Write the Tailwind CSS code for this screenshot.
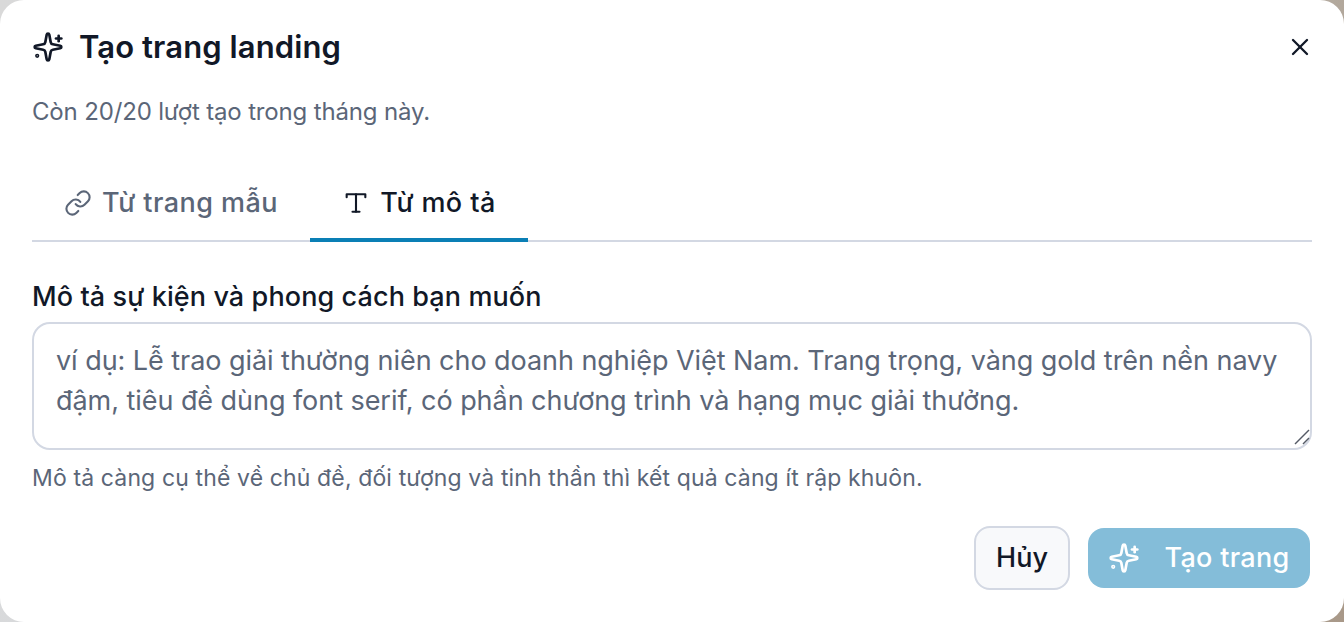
<!DOCTYPE html>
<html lang="vi">
  <head>
    <meta charset="UTF-8" />
    <title>Tạo trang landing</title>
    <script src="https://cdn.jsdelivr.net/npm/@tailwindcss/browser@4"></script>
  </head>
  <body class="h-[622px] w-[1344px] overflow-hidden bg-[linear-gradient(100deg,#d9d9d9,#d5dbe3_40%,#c9ccc9_75%,#a89888)] font-['Inter',sans-serif]">
    <div class="flex h-[622px] flex-col rounded-[24px] bg-white px-8 pt-[28px] text-[#111827]">
      <!-- Header -->
      <div class="flex h-[38px] items-center justify-between">
        <div class="flex items-center gap-[15px]">
          <svg class="h-[32px] w-[32px]" viewBox="0 0 24 24" fill="none" stroke="currentColor" stroke-width="2" stroke-linecap="round" stroke-linejoin="round">
            <path d="M11.017 2.814a1 1 0 0 1 1.966 0l1.051 5.558a2 2 0 0 0 1.594 1.594l5.558 1.051a1 1 0 0 1 0 1.966l-5.558 1.051a2 2 0 0 0-1.594 1.594l-1.051 5.558a1 1 0 0 1-1.966 0l-1.051-5.558a2 2 0 0 0-1.594-1.594l-5.558-1.051a1 1 0 0 1 0-1.966l5.558-1.051a2 2 0 0 0 1.594-1.594z" />
            <path d="M20 3.6v4" />
            <path d="M22 5.6h-4" />
            <circle cx="3.9" cy="18.6" r="0.6" />
          </svg>
          <h1 class="text-[31px] leading-[38px] font-semibold tracking-[0.1px]">Tạo trang landing</h1>
        </div>
        <svg class="mr-[-2px] h-[28px] w-[28px]" viewBox="0 0 24 24" fill="none" stroke="currentColor" stroke-width="2" stroke-linecap="round" stroke-linejoin="round">
          <path d="M18 6 6 18" />
          <path d="m6 6 12 12" />
        </svg>
      </div>
      <p class="mt-[31px] text-[24px] leading-[30px] tracking-[-0.16px] text-[#5b6678]">Còn 20/20 lượt tạo trong tháng này.</p>

      <!-- Tabs -->
      <div class="mt-[35px] flex h-[80px] border-b-2 border-[#d3d8e3]">
        <div class="flex h-[80px] w-[278px] items-center justify-center gap-[10px] pt-[2px] text-[#5b6678]">
          <svg class="h-[28px] w-[28px]" viewBox="0 0 24 24" fill="none" stroke="currentColor" stroke-width="1.8" stroke-linecap="round" stroke-linejoin="round">
            <path d="M10 13a5 5 0 0 0 7.54.54l3-3a5 5 0 0 0-7.07-7.07l-1.72 1.71" />
            <path d="M14 11a5 5 0 0 0-7.54-.54l-3 3a5 5 0 0 0 7.07 7.07l1.71-1.71" />
          </svg>
          <span class="text-[27px] font-medium tracking-[0.45px]">Từ trang mẫu</span>
        </div>
        <div class="flex h-[80px] w-[218px] items-center justify-center gap-[10px] border-b-4 border-[#0a7fb5] pt-[6px]">
          <svg class="h-[28px] w-[28px]" viewBox="0 0 24 24" fill="none" stroke="currentColor" stroke-width="1.8" stroke-linecap="round" stroke-linejoin="round">
            <path d="M4 7V4.5h16V7" />
            <path d="M12 4.5v15" />
            <path d="M9 19.5h6" />
          </svg>
          <span class="text-[27px] font-medium tracking-[0.4px]">Từ mô tả</span>
        </div>
      </div>

      <!-- Field -->
      <label class="mt-[37px] text-[27px] leading-[36px] font-medium tracking-[0.1px]">Mô tả sự kiện và phong cách bạn muốn</label>
      <div class="relative mt-[7px] h-[128px]">
        <textarea
          class="h-[128px] w-full resize-none rounded-[18px] border-2 border-[#d3d8e3] px-[22px] py-[17px] text-[27px] leading-[40px] tracking-[-0.05px] placeholder:text-[#5b6678]"
          placeholder="ví dụ: Lễ trao giải thường niên cho doanh nghiệp Việt Nam. Trang trọng, vàng gold trên nền navy đậm, tiêu đề dùng font serif, có phần chương trình và hạng mục giải thưởng."
        ></textarea>
        <svg class="absolute right-[2px] bottom-[5px] h-[16px] w-[16px]" viewBox="0 0 16 16" fill="none" stroke="#555b66" stroke-width="1.4">
          <path d="M1 15 15 1" />
          <path d="M9 15 15 9" />
        </svg>
      </div>
      <p class="mt-[13px] text-[23px] leading-[30px] tracking-[0.13px] text-[#5b6678]">Mô tả càng cụ thể về chủ đề, đối tượng và tinh thần thì kết quả càng ít rập khuôn.</p>

      <!-- Footer -->
      <div class="mt-[33px] flex justify-end gap-[18px] pr-[2px]">
        <button class="h-[64px] w-[96px] rounded-[16px] border-2 border-[#d3d8e3] bg-[#f8f9fb] text-[27px] font-medium">Hủy</button>
        <button class="flex h-[60px] w-[222px] items-center justify-center gap-[24px] self-center rounded-[16px] bg-[#84bdd9] text-[27px] font-medium tracking-[0.3px] text-white">
          <svg class="h-[32px] w-[32px]" viewBox="0 0 24 24" fill="none" stroke="currentColor" stroke-width="2" stroke-linecap="round" stroke-linejoin="round">
            <path d="M11.017 2.814a1 1 0 0 1 1.966 0l1.051 5.558a2 2 0 0 0 1.594 1.594l5.558 1.051a1 1 0 0 1 0 1.966l-5.558 1.051a2 2 0 0 0-1.594 1.594l-1.051 5.558a1 1 0 0 1-1.966 0l-1.051-5.558a2 2 0 0 0-1.594-1.594l-5.558-1.051a1 1 0 0 1 0-1.966l5.558-1.051a2 2 0 0 0 1.594-1.594z" />
            <path d="M20 3.6v4" />
            <path d="M22 5.6h-4" />
            <circle cx="3.9" cy="18.6" r="0.6" />
          </svg>
          Tạo trang
        </button>
      </div>
    </div>
  </body>
</html>
